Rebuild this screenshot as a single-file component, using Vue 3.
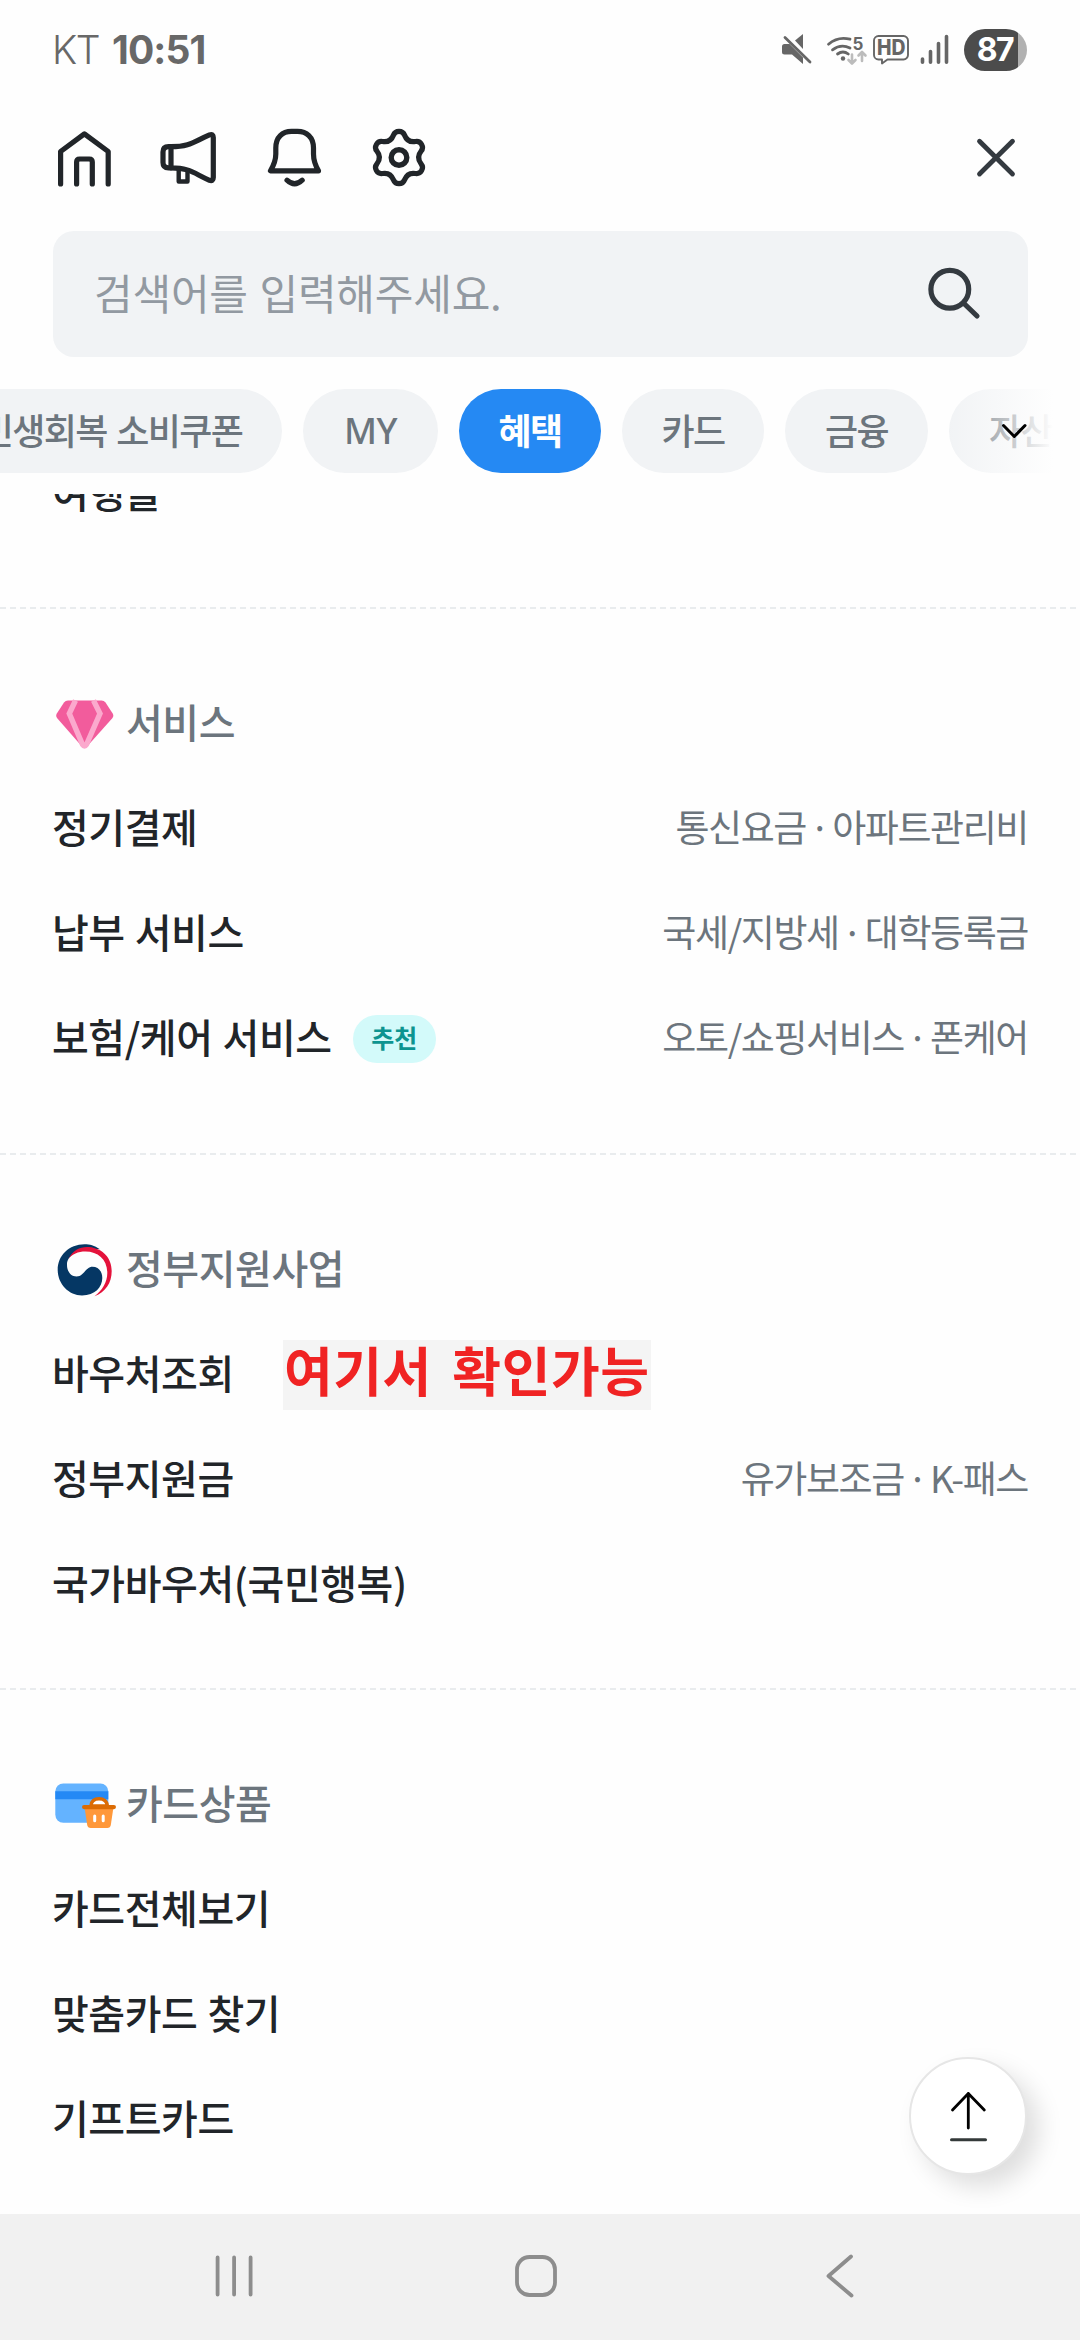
<script setup>
const tabs = [
  { label: '민생회복 소비쿠폰', width: 341 },
  { label: 'MY', width: 135, latin: true },
  { label: '혜택', width: 142, active: true },
  { label: '카드', width: 142 },
  { label: '금융', width: 143 },
  { label: '자산', width: 143 }
]

const sections = [
  {
    icon: 'gem',
    title: '서비스',
    items: [
      { name: '정기결제', desc: '통신요금 · 아파트관리비' },
      { name: '납부 서비스', desc: '국세/지방세 · 대학등록금' },
      { name: '보험/케어 서비스', badge: '추천', desc: '오토/쇼핑서비스 · 폰케어' }
    ]
  },
  {
    icon: 'gov',
    title: '정부지원사업',
    items: [
      { name: '바우처조회', note: '여기서 확인가능' },
      { name: '정부지원금', desc: '유가보조금 · K-패스' },
      { name: '국가바우처(국민행복)' }
    ]
  },
  {
    icon: 'card',
    title: '카드상품',
    items: [{ name: '카드전체보기' }, { name: '맞춤카드 찾기' }, { name: '기프트카드' }]
  }
]
</script>

<template>
  <div class="screen">
    <header class="top">
      <div class="status">
        <div class="status-left"><span class="carrier">KT</span><span class="clock">10:51</span></div>
        <div class="status-right">
          <svg class="status-icons" width="172" height="36" viewBox="780 32 172 36">
            <g fill="#666">
              <path d="M795 40.5 803 34V49z" />
              <path d="M784.5 44H789.5L803 57.500V64L792 54.500H784.500q-2.500 0-2.500-2.500V46.500q0-2.500 2.500-2.500z" />
              <circle cx="843" cy="58.500" r="2.200" />
            </g>
            <path d="M785 37.500 810 62" stroke="#666" stroke-width="2.800" stroke-linecap="round" />
            <g fill="none" stroke="#666" stroke-width="2.800" stroke-linecap="round">
              <path d="M828.500 44.200Q838 36 850 39.200" />
              <path d="M832.500 49.800Q841 43.500 850 48" />
              <path d="M837.500 54Q843 50 848.300 54" />
            </g>
            <text x="852.500" y="49.500" class="svg-text" font-size="17" fill="#666">5</text>
            <g fill="none" stroke="#bcbcbc" stroke-width="2.600" stroke-linecap="round" stroke-linejoin="round">
              <path d="M852 54.500V63M848.500 60 852 63.500 855.500 60" />
              <path d="M862 61V52M858.500 55.500 862 52 865.500 55.500" />
            </g>
            <path
              d="M878.500 36H903.500a4.500 4.500 0 0 1 4.500 4.500V55a4.500 4.500 0 0 1-4.500 4.500H887.500L882 63.500V59.500H878.500a4.500 4.500 0 0 1-4.500-4.500V40.500a4.500 4.500 0 0 1 4.500-4.500z"
              fill="none" stroke="#666" stroke-width="1.900" stroke-linejoin="round"
            />
            <text x="877" y="55.400" class="svg-text heavy" font-size="21" textLength="28.500" lengthAdjust="spacingAndGlyphs" fill="#666">HD</text>
            <g stroke="#666" stroke-width="3.600" stroke-linecap="round">
              <path d="M922.500 59V62.300M930.500 51.500V62.300M938.500 43.500V62.300M946.500 36.500V62.300" />
            </g>
          </svg>
          <div class="battery">87</div>
        </div>
      </div>

      <div class="toolbar">
        <svg width="60" height="60" viewBox="54 128 60 60" class="line">
          <path d="M60.600 184V151.500L84.400 133.800 108.200 151.500V184" />
          <path d="M76.600 184V162Q76.600 159 79.600 159H89.300Q92.300 159 92.300 162V184" />
        </svg>
        <svg width="60" height="60" viewBox="159 128 60 60" class="line">
          <path d="M171 146.700H168.500C164.500 146.700 163 149 163 152V162.500C163 165.500 164.500 167.800 168.500 167.800H171" />
          <path d="M171 146.700V167.800C190 167.800 194 173.500 209.500 180.300Q213.300 181.500 213.300 177.500V137.500Q213.300 133.500 209.500 134.900C194 141.500 190 146.700 171 146.700z" />
          <path d="M178.700 169V181.500H187.500V171" stroke-width="4.400" />
        </svg>
        <svg width="60" height="60" viewBox="264 128 60 60" class="line">
          <path d="M270.500 170.800H318.500C314.500 164 313.500 159.500 313.500 154V148C313.500 137 306.500 131.400 297.500 131.400H291.500C282.500 131.400 275.800 137 275.800 148V154C275.800 159.500 274.500 164 270.500 170.800z" />
          <path d="M287 180.200Q294.600 187.400 302.200 180.200" />
        </svg>
        <svg width="60" height="60" viewBox="-30 -29.500 60 60" class="line">
          <path d="M-5.600-22.300A6 6 0 0 1 5.600-22.300Q8.500-14.700 16.500-16A6 6 0 0 1 22.100-6.300Q17 0 22.100 6.300A6 6 0 0 1 16.500 16Q8.500 14.700 5.600 22.300A6 6 0 0 1-5.600 22.300Q-8.500 14.700-16.500 16A6 6 0 0 1-22.100 6.300Q-17 0-22.100-6.300A6 6 0 0 1-16.500-16Q-8.500-14.700-5.600-22.300z" />
          <circle r="7.800" stroke-width="5.400" />
        </svg>
        <svg width="48" height="48" viewBox="972 134 48 48" class="line close">
          <path d="M979.500 141.300 1012.500 174M1012.500 141.300 979.500 174" />
        </svg>
      </div>

      <div class="search">
        <span>검색어를 입력해주세요.</span>
        <svg width="60" height="60" viewBox="924 264 60 60" class="line glass">
          <circle cx="949.800" cy="289.200" r="18.900" />
          <path d="M964 303.500 977 316" />
        </svg>
      </div>

      <div class="tabs">
        <div class="tab-row">
          <span v-for="t in tabs" :key="t.label" class="tab" :class="{ active: t.active, latin: t.latin }" :style="{ width: t.width + 'px' }">{{ t.label }}</span>
        </div>
        <div class="fade">
          <svg width="30" height="20" viewBox="999 421 30 20" fill="none" stroke="#000" stroke-width="3" stroke-linecap="round" stroke-linejoin="round">
            <path d="M1003.500 425.500 1014.300 436.500 1025 425.500" />
          </svg>
        </div>
      </div>
    </header>

    <main class="content">
      <div class="row first"><span class="name">여행몰</span></div>
      <section v-for="s in sections" :key="s.title" class="section" :class="s.icon">
        <div class="row title">
          <svg v-if="s.icon === 'gem'" width="70" height="60" viewBox="50 693 70 60">
            <path d="M68 700.500H101.500Q104 700.500 105.500 702.500L113 714Q114 716 112.500 718L87.500 746Q84.500 749 81.500 746L57 718Q55.500 716 56.500 714L64 702.500Q65.500 700.500 68 700.500z" fill="#f25c9c" />
            <path d="M75.500 700.500 69.300 713.500 82.500 744.500Q84.500 747.500 86.500 744.500L100 713.500 93.500 700.500" fill="none" stroke="#fba9cd" stroke-width="5.400" />
          </svg>
          <svg v-else-if="s.icon === 'gov'" width="70" height="68" viewBox="0 0 70 68">
            <path d="M50 14.200C44 10.500 40 9.300 34.500 9.300C19 9.300 7.700 20.500 7.700 35C7.700 49 19 60.500 32 60.500C45 60.500 52.300 52 52.300 43C52.300 36 48 31.800 42.500 31.800C35.500 31.800 34 41.500 26.500 41.500C20.500 41.500 17 36 17 30C17 19 30 13 50 14.200z" fill="#053764" />
            <path d="M18.500 24C23 14.500 31 11.300 39 12C53 13.500 61.700 23 61.700 36C61.700 48 55.500 57 44.500 61.300C52 55.500 57.300 47.500 57.300 38C57.300 24.500 48 16.500 35.500 16.500C28 16.500 22 19 18.500 24z" fill="#e4123b" />
          </svg>
          <svg v-else width="70" height="60" viewBox="0 0 70 60">
            <rect x="5.300" y="9.500" width="53" height="39.300" rx="8" fill="#64b3ff" />
            <path d="M5.300 17.200H58.300V25.200H5.300z" fill="#2489f5" />
            <path d="M41 32C41 27.500 44.500 24.700 49 24.700S57.200 27.500 57.200 32z" fill="#fff" stroke="#dc6c04" stroke-width="3.600" />
            <path d="M34.500 33H63.500L60.800 51Q60.300 54 57.300 54H40.700Q37.700 54 37.200 51z" fill="#ff983a" />
            <rect x="32" y="31" width="34" height="4.200" rx="2.100" fill="#dc6c04" />
            <path d="M44.700 42V46.700M53.200 42V46.700" stroke="#fff" stroke-width="3" stroke-linecap="round" />
          </svg>
          <span class="name">{{ s.title }}</span>
        </div>
        <div v-for="i in s.items" :key="i.name" class="row">
          <span class="name">{{ i.name }}</span>
          <span v-if="i.badge" class="badge">{{ i.badge }}</span>
          <span v-if="i.note" class="note">{{ i.note }}</span>
          <span v-if="i.desc" class="desc">{{ i.desc }}</span>
        </div>
      </section>
    </main>

    <button class="to-top">
      <svg width="60" height="60" viewBox="938 2085 60 60" fill="none" stroke-linecap="round" stroke-linejoin="round">
        <path d="M968.300 2127V2092.500M952.500 2109 968.300 2092.500 984.300 2109" stroke="#000" stroke-width="2.800" />
        <path d="M951.500 2138.800H985.500" stroke="#343a3a" stroke-width="3" />
      </svg>
    </button>

    <nav class="nav">
      <svg width="1080" height="126" viewBox="0 2214 1080 126" fill="none" stroke="#8d8d8d" stroke-width="3.800" stroke-linecap="round" stroke-linejoin="round">
        <path d="M217.600 2257.500V2294.500M234.100 2257.500V2294.500M250.600 2257.500V2294.500" />
        <rect x="517" y="2257" width="38" height="38" rx="12.500" />
        <path d="M851 2256.500 828.500 2276 851.500 2295.500" />
      </svg>
    </nav>
  </div>
</template>

<style>
body {
  margin: 0;
  background: #fff;
}
</style>

<style scoped>
.screen {
  position: relative;
  width: 1080px;
  height: 2340px;
  display: flex;
  flex-direction: column;
  overflow: hidden;
  background: #fefefe;
  color: #212529;
  font-family: "Noto Sans CJK KR", "Noto Sans", sans-serif;
}
svg {
  display: block;
  flex: none;
}
.top {
  height: 494px;
  flex: none;
}
.status {
  height: 100px;
  box-sizing: border-box;
  padding: 0 53px 0 52px;
  display: flex;
  align-items: center;
  justify-content: space-between;
  font-family: Inter, sans-serif;
  color: #686868;
}
.status-left {
  display: flex;
  align-items: baseline;
  gap: 13px;
  font-size: 39px;
  line-height: 46px;
}
.carrier {
  font-weight: 300;
  letter-spacing: -1.500px;
}
.clock {
  font-weight: 700;
  letter-spacing: -0.900px;
}
.status-right {
  display: flex;
  align-items: center;
  gap: 12px;
}
.svg-text {
  font-family: Inter, sans-serif;
  font-weight: 700;
}
.svg-text.heavy {
  font-weight: 800;
}
.battery {
  width: 63px;
  height: 42px;
  box-sizing: border-box;
  padding-right: 1px;
  border-radius: 21px;
  background: linear-gradient(90deg, #4c4c4c 54px, #b1b1b1 54px);
  color: #fff;
  font-weight: 700;
  font-size: 32px;
  line-height: 42px;
  letter-spacing: -1.500px;
  text-align: center;
}
.toolbar {
  height: 60px;
  margin: 28px 60px 0 54px;
  display: flex;
  align-items: center;
  gap: 45px;
}
.line {
  fill: none;
  stroke: #212529;
  stroke-width: 5.200px;
  stroke-linecap: round;
  stroke-linejoin: round;
}
.close {
  margin-left: auto;
  stroke: #343a40;
  stroke-width: 4.800px;
}
.glass {
  stroke: #343a40;
}
.search {
  height: 126px;
  margin: 43px 52px 0 53px;
  box-sizing: border-box;
  padding: 0 44px 0 41px;
  border-radius: 21px;
  background: #f1f3f5;
  display: flex;
  align-items: center;
  justify-content: space-between;
  color: #9299a1;
  font-size: 42px;
  letter-spacing: -0.200px;
  word-spacing: 2.500px;
  line-height: 60px;
}
.search span {
  padding-bottom: 4px;
}
.tabs {
  position: relative;
  margin-top: 32px;
  height: 84px;
  overflow: hidden;
}
.tab-row {
  display: flex;
  gap: 21px;
  margin-left: -59px;
}
.tab {
  flex: none;
  height: 84px;
  box-sizing: border-box;
  padding-bottom: 3px;
  border-radius: 42px;
  background: #f1f3f5;
  color: #6c757d;
  font-size: 36px;
  font-weight: 500;
  line-height: 81px;
  letter-spacing: -1.600px;
  word-spacing: 3px;
  text-align: center;
  white-space: nowrap;
}
.tab.latin {
  font-family: "Noto Sans", sans-serif;
  line-height: 84px;
  letter-spacing: -0.500px;
}
.tab.active {
  background: #2589f3;
  color: #fff;
  font-weight: 700;
}
.fade {
  position: absolute;
  top: 0;
  right: 0;
  width: 135px;
  height: 84px;
  box-sizing: border-box;
  padding: 32px 0 0 54px;
  background: linear-gradient(90deg, rgba(254, 254, 254, 0), #fefefe 108px);
}
.content {
  flex: 1;
  min-height: 0;
  overflow: hidden;
}
.row {
  height: 105px;
  padding: 0 52px;
  display: flex;
  align-items: center;
  white-space: nowrap;
}
.row > span {
  line-height: 60px;
}
.first {
  margin: -54px 0 62px;
}
.section {
  padding-top: 63px;
  background: repeating-linear-gradient(90deg, #e9ecee 0 6px, transparent 6px 10px) 0 0 / 100% 2px no-repeat;
}
.section.gem {
  padding-bottom: 63px;
}
.section.gov {
  padding-bottom: 52px;
}
.name {
  font-size: 40px;
  font-weight: 500;
  letter-spacing: -0.450px;
  word-spacing: 1.500px;
  padding-bottom: 4px;
}
.title {
  padding-left: 50px;
}
.title .name {
  margin-left: 6px;
  color: #6c757d;
}
.desc {
  margin-left: auto;
  padding-bottom: 4px;
  color: #6c757d;
  font-size: 37px;
  letter-spacing: -1.400px;
  word-spacing: -3.500px;
}
.row > .badge {
  margin: 2px 0 0 21px;
  width: 83px;
  height: 48px;
  border-radius: 24px;
  background: #d3fafa;
  color: #0d9490;
  font-size: 25px;
  font-weight: 700;
  line-height: 44px;
  text-align: center;
}
.row > .note {
  margin: 2px 0 0 49px;
  width: 368px;
  height: 70px;
  background: #f4f4f4;
  color: #f02323;
  font-size: 53px;
  font-weight: 700;
  line-height: 58px;
  letter-spacing: 0.500px;
  word-spacing: 8px;
  text-align: center;
}
.to-top {
  position: absolute;
  left: 909px;
  top: 2057px;
  width: 118px;
  height: 118px;
  padding: 0;
  border: 2px solid #e6e6e6;
  border-radius: 50%;
  background: #fff;
  box-shadow: 12px 12px 24px rgba(0, 0, 0, 0.13);
  display: flex;
  align-items: center;
  justify-content: center;
}
.nav {
  height: 126px;
  flex: none;
  background: #f1f1f1;
}
</style>
